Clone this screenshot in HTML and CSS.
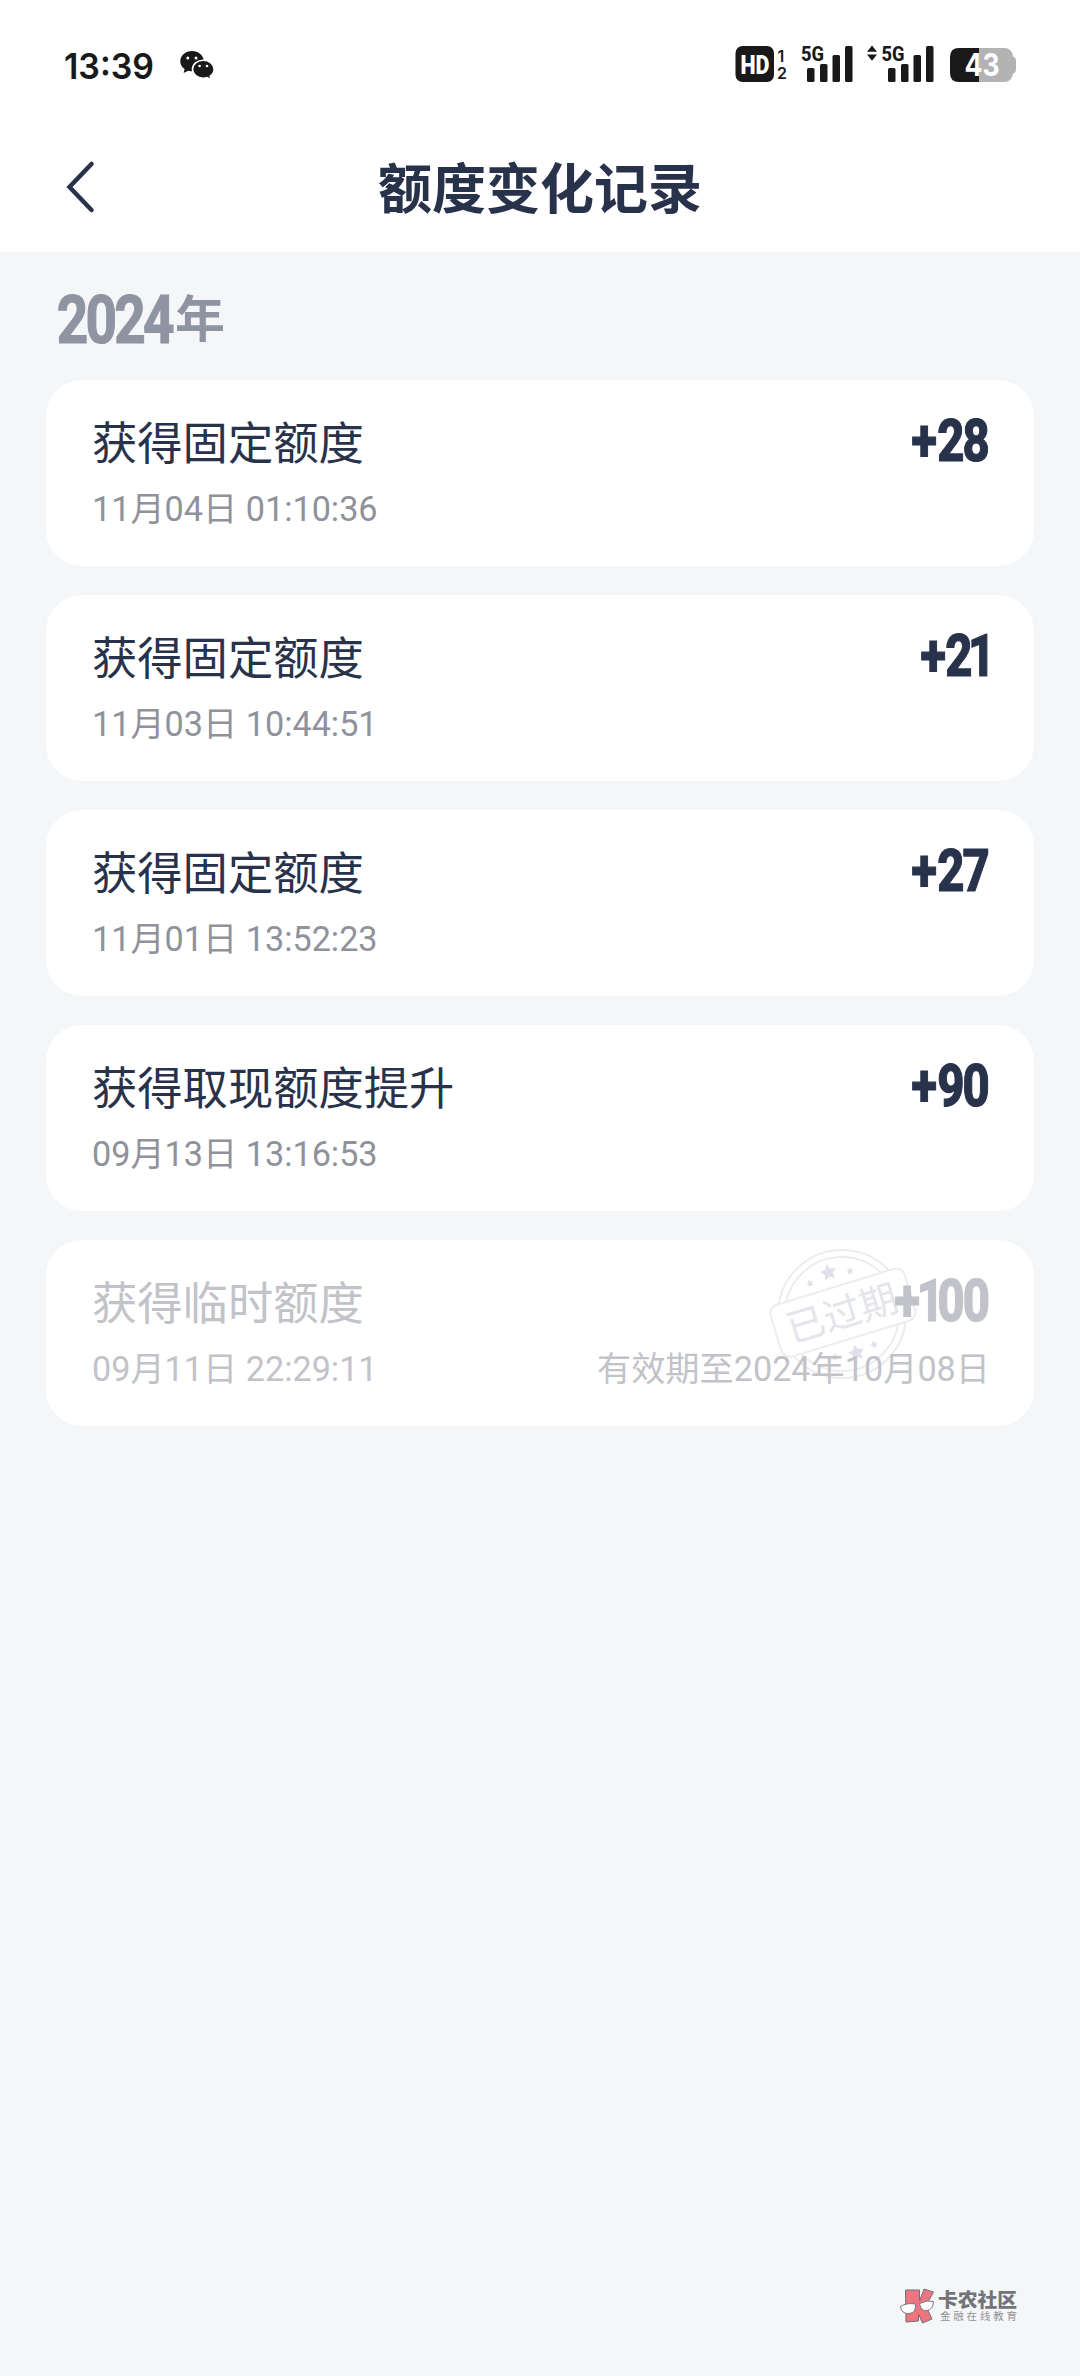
FILE: index.html
```html
<!DOCTYPE html>
<html lang="zh-CN">
<head>
<meta charset="utf-8">
<title>额度变化记录</title>
<link rel="stylesheet" href="styles.css">
</head>
<body>
<div class="screen">
  <header class="top">
    <div class="status">
      <svg class="status-left" width="160" height="50" viewBox="60 40 160 50">
        <text class="clock" x="64" y="78.500" textLength="90" lengthAdjust="spacingAndGlyphs">13:39</text>
        <path d="M192 51c-6.500 0-11.700 4.500-11.700 10.200 0 3.200 1.600 6 4.300 7.900l-1 3.900 4.600-2.200c1.400.4 2.700.5 4.100.5 6.500 0 11.500-4.500 11.500-10.100S198.500 51 192 51z"/>
        <path class="bubble" d="M203.300 60.200c-6 0-10.800 4-10.800 9s4.800 9 10.800 9c1.300 0 2.600-.2 3.800-.6l4 2.200-.9-3.700c2.400-1.600 3.900-4.100 3.900-6.900 0-5-4.800-9-10.800-9z"/>
        <g class="eyes"><circle cx="187.800" cy="58" r="1.500"/><circle cx="196" cy="58" r="1.500"/><circle cx="199.600" cy="66" r="1.300"/><circle cx="207" cy="66" r="1.300"/></g>
      </svg>
      <svg class="status-right" width="290" height="50" viewBox="730 40 290 50">
        <rect x="735.500" y="46" width="38.500" height="36" rx="7"/>
        <text class="hd" x="740.500" y="73.500" textLength="29" lengthAdjust="spacingAndGlyphs">HD</text>
        <text class="sim" x="777.500" y="61.500">1</text>
        <text class="sim" x="777" y="79">2</text>
        <text class="net" x="801" y="61" textLength="23" lengthAdjust="spacingAndGlyphs">5G</text>
        <rect x="807" y="68" width="7.500" height="14" rx="1.500"/><rect x="820" y="64" width="7.500" height="18" rx="1.500"/><rect x="832.500" y="55" width="7.500" height="27" rx="1.500"/><rect x="845" y="46" width="7.500" height="36" rx="1.500"/>
        <path d="M867 51.800l5-6.300 5 6.300zM867 54.500l5 6.300 5-6.300z"/>
        <text class="net" x="881.500" y="61" textLength="23" lengthAdjust="spacingAndGlyphs">5G</text>
        <rect x="888" y="68" width="7.500" height="14" rx="1.500"/><rect x="901" y="64" width="7.500" height="18" rx="1.500"/><rect x="913.500" y="55" width="7.500" height="27" rx="1.500"/><rect x="926" y="46" width="7.500" height="36" rx="1.500"/>
        <path class="battery-rest" d="M979 48h25q8 0 9 8.500q3 1 3 4v9q0 3-3 4q-1 8.500-9 8.500h-25z"/>
        <path d="M979 48h-20q-9 0-9 9v16q0 9 9 9h20z"/>
        <text class="level" x="964.500" y="76" textLength="35" lengthAdjust="spacingAndGlyphs">43</text>
      </svg>
    </div>
    <div class="nav">
      <svg class="back" width="32" height="54" viewBox="0 0 32 54"><path d="M27.500 4L5.500 27L27.500 50"/></svg>
      <h1 class="title">额度变化记录</h1>
    </div>
  </header>

  <main class="content">
    <h2 class="year">
      <svg class="num" width="118" height="60" viewBox="57 290 118 60"><text class="year-num" transform="scale(.82 1)" x="69.300 104.400 139.300 174.500" y="343">2024</text></svg><span>年</span>
    </h2>

    <section class="card">
      <div class="info"><p class="name">获得固定额度</p><p class="time">11月04日 01:10:36</p></div>
      <svg class="num" width="100" height="50" viewBox="890 414 100 50"><text class="amount" transform="scale(.8 1)" x="1139.500 1171.500 1203" y="461">+28</text></svg>
    </section>
    <section class="card">
      <div class="info"><p class="name">获得固定额度</p><p class="time">11月03日 10:44:51</p></div>
      <svg class="num" width="100" height="50" viewBox="890 414 100 50"><text class="amount" transform="scale(.8 1)" x="1150.500 1181.500 1210" y="461">+21</text></svg>
    </section>
    <section class="card">
      <div class="info"><p class="name">获得固定额度</p><p class="time">11月01日 13:52:23</p></div>
      <svg class="num" width="100" height="50" viewBox="890 414 100 50"><text class="amount" transform="scale(.8 1)" x="1139.500 1171.500 1203" y="461">+27</text></svg>
    </section>
    <section class="card">
      <div class="info"><p class="name">获得取现额度提升</p><p class="time">09月13日 13:16:53</p></div>
      <svg class="num" width="100" height="50" viewBox="890 414 100 50"><text class="amount" transform="scale(.8 1)" x="1139.500 1171.500 1203" y="461">+90</text></svg>
    </section>
    <section class="card expired">
      <svg class="stamp" width="150" height="140" viewBox="767 1244 150 140">
        <defs><path id="star" d="M0-1L.29-.4L.95-.31L.48.15L.59.81L0 .5L-.59.81L-.48.15L-.95-.31L-.29-.4Z"/></defs>
        <circle class="ring" cx="842" cy="1314" r="64"/>
        <circle class="ring" cx="842" cy="1314" r="57"/>
        <g class="stars">
          <use href="#star" transform="translate(828.500 1272.500) rotate(-14) scale(8.500)"/>
          <use href="#star" transform="translate(810 1283.500) rotate(-24) scale(4)"/>
          <use href="#star" transform="translate(850 1271) scale(4)"/>
          <use href="#star" transform="translate(856.500 1353) rotate(-14) scale(8.500)"/>
          <use href="#star" transform="translate(874 1344.500) rotate(-24) scale(4)"/>
          <use href="#star" transform="translate(835 1357) scale(4)"/>
        </g>
        <g transform="rotate(-17 842 1313)">
          <rect class="plate" x="773" y="1286" width="140" height="54" rx="9"/>
          <text class="stamp-text" x="842" y="1327" text-anchor="middle">已过期</text>
        </g>
      </svg>
      <div class="info"><p class="name">获得临时额度</p><p class="time">09月11日 22:29:11</p></div>
      <div class="side">
        <svg class="num" width="100" height="50" viewBox="890 414 100 50"><text class="amount" transform="scale(.8 1)" x="1118 1146 1172 1203.500" y="461">+100</text></svg>
        <p class="time">有效期至2024年10月08日</p>
      </div>
    </section>
  </main>

  <footer class="mark">
    <svg width="160" height="70" viewBox="0 0 160 70">
      <path class="k" d="M25.500 20h14v11L44 19l9.500 3-7.500 14 6 13-9.500 4-4-9v7l-12.500 1z"/>
      <path class="lens" d="M20.500 36.500q6-4 15-2.500q1 9-6.500 9.500t-8.500-7zM39.500 33.500q8-4 14-2q-.5 8-6.500 9t-7.500-7z"/>
      <text class="mark-name" x="58" y="36.500" textLength="79" lengthAdjust="spacingAndGlyphs">卡农社区</text>
      <text class="mark-sub" x="60" y="50" textLength="77">金融在线教育</text>
    </svg>
  </footer>
</div>
</body>
</html>
```
FILE: styles.css
```css
* { box-sizing: border-box; }
body { margin: 0; background: #f5f6f8; }
h1, h2, p { margin: 0; }
svg { display: block; }

.screen {
  width: 1080px;
  height: 2376px;
  display: flex;
  flex-direction: column;
  background: #f5f6f8;
  color: #28324b;
  font-family: Roboto, "Noto Sans CJK SC", sans-serif;
}

.top { height: 252px; background: #fff; }
.status {
  display: flex;
  justify-content: space-between;
  padding: 40px 60px 0;
  height: 130px;
  fill: #191919;
}
.clock { font: 600 36px Inter, sans-serif; }
.bubble { stroke: #fff; stroke-width: 1.6; }
.eyes { fill: #fff; }
.hd { font: 900 26px Roboto, sans-serif; fill: #fff; }
.sim { font: 600 16px Inter, sans-serif; }
.net { font: 800 21px Roboto, sans-serif; }
.battery-rest { fill: #b3b3b3; }
.level { font: 700 31px Inter, sans-serif; fill: #fff; }

.nav {
  display: grid;
  grid-template-columns: 100px 1fr 100px;
  align-items: center;
  height: 122px;
}
.back { justify-self: end; margin-right: 4px; margin-top: -9px; fill: none; stroke: #28324b; stroke-width: 4.5; stroke-linecap: round; }
.title { text-align: center; font-size: 54px; line-height: 80px; font-weight: 700; }

.content { display: flex; flex-direction: column; gap: 29px; padding: 38px 46px 0; flex: 1; }
.year { display: flex; height: 61px; padding-left: 11px; color: #8f94a2; font-size: 50px; line-height: 61px; font-weight: 700; }
.num { fill: currentColor; stroke: currentColor; stroke-width: 1.2; overflow: visible; }
.year-num { font: 700 67px Roboto, sans-serif; }

.card {
  position: relative;
  display: flex;
  justify-content: space-between;
  height: 186px;
  padding: 34px 44px 0 46px;
  border-radius: 36px;
  background: #fff;
}
.name { margin-top: 1px; font-size: 45.3px; line-height: 60px; }
.time { margin-top: 4px; font-size: 34.200px; line-height: 60px; color: #8f929b; }
.amount { font: 800 59px Roboto, sans-serif; }
.expired, .expired .time { color: #c2c3c9; }
.side { position: relative; display: flex; flex-direction: column; align-items: flex-end; }
.side .time { margin-top: 15px; }

.stamp { position: absolute; left: 721px; top: 4px; }
.ring { fill: none; stroke: #ecedf1; stroke-width: 2; }
.stars { fill: #dfe0e9; }
.plate { fill: #fff; stroke: #ecedf1; stroke-width: 2; }
.stamp-text { font: 400 38px "Noto Sans CJK SC", sans-serif; fill: #e4e5ea; }

.mark { display: flex; justify-content: flex-end; padding: 0 40px 36px 0; }
.k { fill: #ee7480; stroke: #6f7078; stroke-width: 1; }
.lens { fill: #fff; stroke: #77787e; stroke-width: 1; }
.mark-name { font: 900 19px "Noto Sans CJK SC", sans-serif; fill: #737478; }
.mark-sub { font: 400 10.500px "Noto Sans CJK SC", sans-serif; fill: #929397; }
```
